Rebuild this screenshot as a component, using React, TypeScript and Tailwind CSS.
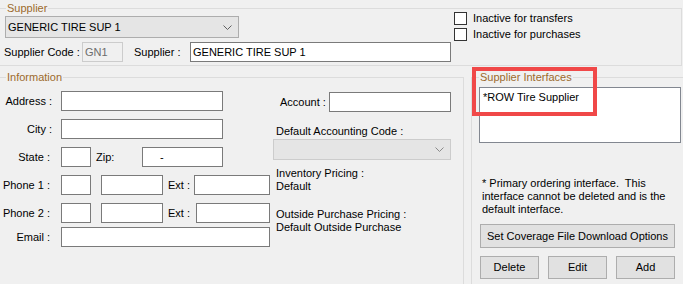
import React from 'react';

const groupLine = 'border-[#dcdcdc]';

const Chevron = ({ color = '#606060' }: { color?: string }) => (
  <svg width="9" height="5" viewBox="0 0 9 5" className="block">
    <polyline points="0.5,0.5 4.5,4.5 8.5,0.5" fill="none" stroke={color} strokeWidth="1" />
  </svg>
);

const Box = ({ w, children, className = '' }: { w: string; children?: React.ReactNode; className?: string }) => (
  <div className={`${w} shrink-0 h-[20px] bg-white border border-[#7a7a7a] flex items-center ${className}`}>{children}</div>
);

const Check = ({ label }: { label: string }) => (
  <div className="flex items-center h-[13px]">
    <div className="w-[13px] h-[13px] bg-white border border-[#333333]" />
    <span className="ml-[6px] leading-[13px]">{label}</span>
  </div>
);

const Btn = ({ label, w }: { label: string; w: string }) => (
  <div className={`${w} shrink-0 h-[23px] bg-[#e1e1e1] border border-[#adadad] flex items-center justify-center`}>{label}</div>
);

export default function App() {
  return (
    <div className="relative w-[683px] h-[284px] overflow-hidden bg-[#f0f0f0] text-[11px] text-black font-['Liberation_Sans',Arial,sans-serif]">
      {/* Supplier */}
      <fieldset className={`mt-[1px] w-[682px] border-t border-r border-b border-l-0 ${groupLine} pl-[4px] pb-[3px]`}>
        <legend className="ml-[2px] px-[1px] h-[14px] leading-[14px] text-[#9c6a2c]">Supplier</legend>
        <div className="flex">
          <div className="flex flex-col shrink-0">
            <div className="ml-[1px] mt-[1px] w-[234px] h-[22px] bg-[#e5e5e5] border border-[#adadad] flex items-center pl-[2px] pr-[6px]">
              <span className="flex-1">GENERIC TIRE SUP 1</span>
              <Chevron />
            </div>
            <div className="mt-[4px] flex items-center h-[20px]">
              <span className="w-[78px] shrink-0">Supplier Code :</span>
              <div className="w-[41px] shrink-0 h-[20px] border border-[#cccccc] flex items-center pl-[2px] text-[#6d6d6d]">GN1</div>
              <span className="ml-[11px] w-[56px] shrink-0">Supplier :</span>
              <Box w="w-[261px]" className="pl-[2px]">GENERIC TIRE SUP 1</Box>
            </div>
          </div>
          <div className="ml-[3px] -mt-[3px] flex flex-col gap-[3px] shrink-0">
            <Check label="Inactive for transfers" />
            <Check label="Inactive for purchases" />
          </div>
        </div>
      </fieldset>

      <div className="mt-[4px] flex">
        {/* Information */}
        <fieldset className={`shrink-0 w-[464px] h-[240px] border-t border-r border-l-0 border-b-0 ${groupLine}`}>
          <legend className="ml-[6px] px-[1px] h-[14px] leading-[14px] text-[#9c6a2c]">Information</legend>
          <div className="flex">
            <div className="w-[270px] shrink-0 flex flex-col">
              <div className="mt-[7px] flex items-center h-[20px]">
                <span className="w-[61px] shrink-0 pr-[9px] text-right">Address :</span>
                <Box w="w-[162px]" />
              </div>
              <div className="mt-[8px] flex items-center h-[20px]">
                <span className="w-[61px] shrink-0 pr-[9px] text-right">City :</span>
                <Box w="w-[162px]" />
              </div>
              <div className="mt-[8px] flex items-center h-[20px]">
                <span className="w-[61px] shrink-0 pr-[11px] text-right">State :</span>
                <Box w="w-[30px]" />
                <span className="ml-[5px] w-[46px] shrink-0">Zip:</span>
                <Box w="w-[81px]" className="pl-[17px]">-</Box>
              </div>
              <div className="mt-[8px] flex items-center h-[20px]">
                <span className="w-[61px] shrink-0 pr-[11px] text-right">Phone 1 :</span>
                <Box w="w-[30px]" />
                <Box w="w-[62px]" className="ml-[10px]" />
                <span className="ml-[5px] w-[26px] shrink-0">Ext :</span>
                <Box w="w-[76px]" />
              </div>
              <div className="mt-[8px] flex items-center h-[20px]">
                <span className="w-[61px] shrink-0 pr-[11px] text-right">Phone 2 :</span>
                <Box w="w-[30px]" />
                <Box w="w-[62px]" className="ml-[10px]" />
                <span className="ml-[5px] w-[28px] shrink-0">Ext :</span>
                <Box w="w-[74px]" />
              </div>
              <div className="mt-[4px] flex items-center h-[20px]">
                <span className="w-[61px] shrink-0 pr-[11px] text-right">Email :</span>
                <Box w="w-[209px]" />
              </div>
            </div>

            <div className="ml-[3px] w-[178px] shrink-0 flex flex-col">
              <div className="mt-[8px] flex items-center h-[20px]">
                <span className="ml-[7px] w-[49px] shrink-0">Account :</span>
                <Box w="w-[122px]" />
              </div>
              <div className="mt-[13px] ml-[3px] leading-[13px]">Default Accounting Code :</div>
              <div className="mt-[1px] w-[178px] h-[21px] bg-[#e5e5e5] border border-[#cccccc] flex items-center justify-end pr-[6px]">
                <Chevron color="#8a8a8a" />
              </div>
              <div className="mt-[7px] ml-[3px] leading-[13px]">
                Inventory Pricing :<br />Default
              </div>
              <div className="mt-[15px] ml-[3px] leading-[13px]">
                Outside Purchase Pricing :<br />Default Outside Purchase
              </div>
            </div>
          </div>
        </fieldset>

        {/* Supplier Interfaces */}
        <fieldset className={`shrink-0 ml-[7px] w-[240px] h-[240px] border-t border-l border-r-0 border-b-0 ${groupLine} pl-[7px]`}>
          <legend className="ml-0 px-[1px] h-[14px] leading-[14px] text-[#9c6a2c]">Supplier Interfaces</legend>
          <div className="mt-[3px] w-[202px] h-[56px] bg-white border border-[#828790] pl-[3px] pt-[3px] leading-[13px]">
            *ROW Tire Supplier
          </div>
          <div className="mt-[34px] ml-[3px] leading-[13px] whitespace-pre">
            {'* Primary ordering interface.  This\ninterface cannot be deleted and is the\ndefault interface.'}
          </div>
          <div className="mt-[8px] ml-[1px] w-[195px] h-[24px] bg-[#e1e1e1] border border-[#adadad] flex items-center justify-center">
            Set Coverage File Download Options
          </div>
          <div className="mt-[8px] ml-[1px] flex gap-[9px]">
            <Btn label="Delete" w="w-[59px]" />
            <Btn label="Edit" w="w-[59px]" />
            <Btn label="Add" w="w-[59px]" />
          </div>
        </fieldset>
      </div>

      {/* highlight annotation */}
      <div className="absolute left-[472px] top-[67px] w-[125px] h-[49px] border-4 border-[#f04848]" />
    </div>
  );
}
